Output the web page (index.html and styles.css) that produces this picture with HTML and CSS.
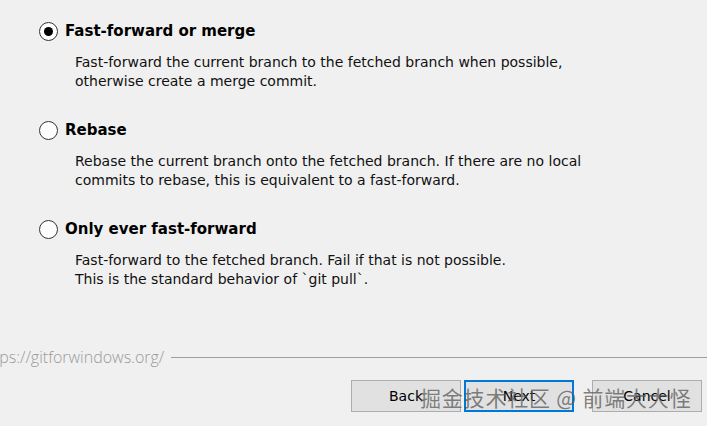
FILE: index.html
```html
<!DOCTYPE html>
<html>
<head>
<meta charset="utf-8">
<link rel="stylesheet" href="styles.css">
</head>
<body>
<div class="page">
  <div class="options">
    <div class="option">
      <div class="opt-head">
        <span class="radio checked"></span>
        <span class="opt-title">Fast-forward or merge</span>
      </div>
      <p class="opt-desc">Fast-forward the current branch to the fetched branch when possible,<br>otherwise create a merge commit.</p>
    </div>
    <div class="option">
      <div class="opt-head">
        <span class="radio"></span>
        <span class="opt-title">Rebase</span>
      </div>
      <p class="opt-desc">Rebase the current branch onto the fetched branch. If there are no local<br>commits to rebase, this is equivalent to a fast-forward.</p>
    </div>
    <div class="option">
      <div class="opt-head">
        <span class="radio"></span>
        <span class="opt-title">Only ever fast-forward</span>
      </div>
      <p class="opt-desc">Fast-forward to the fetched branch. Fail if that is not possible.<br>This is the standard behavior of `git pull`.</p>
    </div>
  </div>
  <div class="sep">
    <span class="url">https://gitforwindows.org/</span>
    <span class="rule"></span>
  </div>
  <div class="buttons">
    <button class="btn">Back</button>
    <button class="btn primary">Next</button>
    <button class="btn cancel">Cancel</button>
  </div>
  <div class="watermark">掘金技术社区 @ 前端大大怪</div>
</div>
</body>
</html>
```
FILE: styles.css
```css
html, body {
  margin: 0;
  padding: 0;
  background: #f0f0f0;
}
.page {
  position: relative;
  width: 707px;
  height: 426px;
  overflow: hidden;
  font-family: "DejaVu Sans", sans-serif;
  color: #000;
}
.options {
  display: flex;
  flex-direction: column;
  padding: 21px 0 0 39px;
  gap: 29px;
}
.opt-head {
  display: flex;
  align-items: center;
  gap: 7px;
  height: 20px;
}
.radio {
  box-sizing: border-box;
  width: 19px;
  height: 19px;
  border: 1px solid #333;
  border-radius: 50%;
  background: #fff;
  display: flex;
  align-items: center;
  justify-content: center;
}
.radio.checked::after {
  content: "";
  width: 9px;
  height: 9px;
  border-radius: 50%;
  background: #000;
}
.opt-title {
  font-weight: bold;
  font-size: 15px;
}
.opt-desc {
  margin: 12px 0 0 36px;
  font-size: 14px;
  line-height: 19px;
  color: #111;
}
.sep {
  display: flex;
  align-items: center;
  margin-top: 59px;
  height: 18px;
}
.url {
  margin-left: -21px;
  color: #9a9a9a;
  font-family: "Open Sans", sans-serif;
  font-weight: 300;
  font-size: 16px;
  white-space: nowrap;
}
.rule {
  flex: 1;
  height: 1px;
  background: #a0a0a0;
  margin-left: 7px;
}
.buttons {
  display: flex;
  justify-content: flex-end;
  margin-top: 14px;
  padding-right: 5px;
}
.btn {
  box-sizing: border-box;
  width: 110px;
  height: 32px;
  background: #e1e1e1;
  border: 1px solid #adadad;
  font-family: "DejaVu Sans", sans-serif;
  font-size: 14px;
  color: #000;
  padding: 0;
  margin-left: 3px;
}
.btn.primary {
  border: 2px solid #0078d7;
}
.btn.cancel {
  margin-left: 18px;
}
.watermark {
  position: absolute;
  left: 420px;
  top: 382px;
  font-family: "Noto Sans CJK SC", sans-serif;
  font-size: 21px;
  color: rgba(90, 90, 90, 0.75);
  white-space: nowrap;
  letter-spacing: 0.8px;
}
```
